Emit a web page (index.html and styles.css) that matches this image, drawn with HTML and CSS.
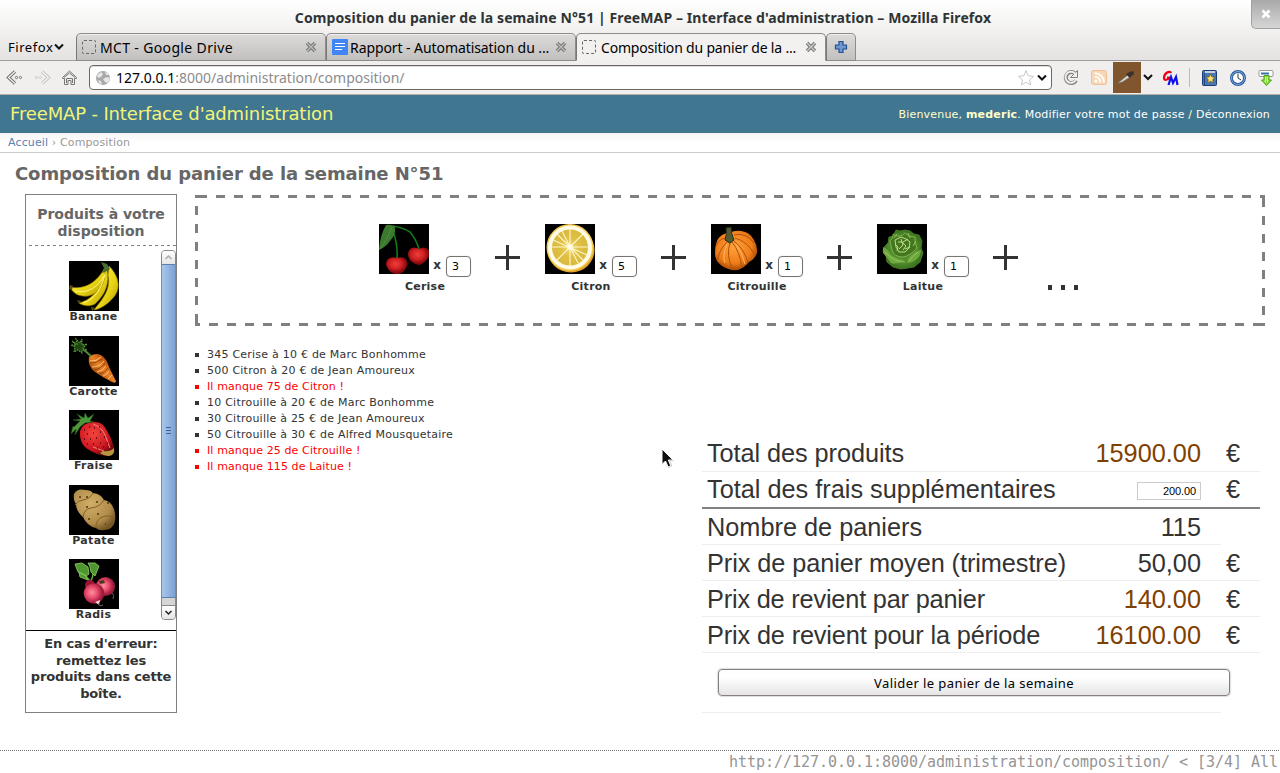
FILE: index.html
```html
<!DOCTYPE html>
<html lang="fr">
<head>
<meta charset="utf-8">
<title>Composition du panier de la semaine N°51</title>
<link rel="stylesheet" href="styles.css">
</head>
<body>
<div class="chrome">
  <div class="titlebar"><span class="t-title">Composition du panier de la semaine N°51 | FreeMAP – Interface d'administration – Mozilla Firefox</span>
    <div class="winclose"><svg width="10" height="10" viewBox="0 0 10 10"><path d="M1.5 1.5l7 7M8.5 1.5l-7 7" stroke="#fff" stroke-width="2.6"/></svg></div>
  </div>
  <div class="tabs">
    <div class="ffmenu"><span class="t-ff">Firefox</span><svg width="12" height="8" viewBox="0 0 12 8"><path d="M2 1.5l4 4 4-4" fill="none" stroke="#111" stroke-width="2"/></svg></div>
    <div class="tab"><i class="blank"></i><span class="t-tab1">MCT - Google Drive</span><svg class="x" width="12" height="12" viewBox="0 0 12 12"><path d="M2 2l8 8M10 2l-8 8" stroke="#777a75" stroke-width="3.6"/><path d="M2 2l8 8M10 2l-8 8" stroke="#b9bbb7" stroke-width="1.4"/></svg></div>
    <div class="tab"><svg width="16" height="16" viewBox="0 0 16 16"><rect width="16" height="16" rx="1" fill="#4285f4"/><path d="M3 4.5h10M3 7.5h10M3 10.5h7" stroke="#fff" stroke-width="1"/></svg><span class="t-tab2">Rapport - Automatisation du ...</span><svg class="x" width="12" height="12" viewBox="0 0 12 12"><path d="M2 2l8 8M10 2l-8 8" stroke="#777a75" stroke-width="3.6"/><path d="M2 2l8 8M10 2l-8 8" stroke="#b9bbb7" stroke-width="1.4"/></svg></div>
    <div class="tab on"><i class="blank"></i><span class="t-tab3">Composition du panier de la ...</span><svg class="x" width="12" height="12" viewBox="0 0 12 12"><path d="M2 2l8 8M10 2l-8 8" stroke="#777a75" stroke-width="3.6"/><path d="M2 2l8 8M10 2l-8 8" stroke="#c9cbc7" stroke-width="1.4"/></svg></div>
    <div class="tab plus"><svg width="14" height="14" viewBox="0 0 14 14"><path d="M5 1.5h4V5h3.500v4H9v3.500H5V9H1.500V5H5z" fill="#6c98cf" stroke="#24508c" stroke-width="1.200"/></svg></div>
  </div>
  <div class="toolbar">
    <svg class="nav" width="84" height="33" viewBox="0 0 84 33" fill="none">
      <path d="M15 10.500L8.500 16.500 15 22.500" stroke="#6e6e6e" stroke-width="3.200"/><path d="M15 10.500L8.500 16.500 15 22.500" stroke="#f4f4f4" stroke-width="1.200"/>
      <circle cx="16.500" cy="16.500" r="1.200" stroke="#777"/><circle cx="20.500" cy="16.500" r="1.100" stroke="#777"/>
      <path d="M42 10.500l6.500 6-6.500 6" stroke="#c4c4c4" stroke-width="3.200"/><path d="M42 10.500l6.500 6-6.500 6" stroke="#f6f6f6" stroke-width="1.200"/>
      <circle cx="36.500" cy="16.500" r="1.200" stroke="#ccc"/><circle cx="40.500" cy="16.500" r="1.100" stroke="#ccc"/>
      <path d="M62.500 16.500L69.500 10l7 6.500v1h-2v6h-3.500v-4h-3v4H64.500v-6h-2z" stroke="#777"/><path d="M64 16.500l5.500-4.500 5.500 4.500" stroke="#777"/>
      <path d="M66.500 22v-4.500h6V22" stroke="#777"/>
    </svg>
    <div class="url">
      <svg width="16" height="16" viewBox="0 0 16 16"><circle cx="8" cy="8" r="7" fill="#a8a8a8"/><path d="M2 5l4-3 2 2-2 3-3 1zM8 9l4-2 3 1-2 5-3-1zM10 2l3 1 1 2-3 0zM3 10l3 1 1 4-3-2z" fill="#e6e6e6"/></svg>
      <span class="t-url"><b>127.0.0.1</b>:8000/administration/composition/</span>
      <svg class="star" width="34" height="18" viewBox="0 0 34 18" fill="none"><path d="M9 1.500l2.200 5.300 5.300.6-4 3.500 1.200 5.100L9 13.300 4.300 16l1.200-5.100-4-3.500 5.300-.6z" stroke="#c8c8c8"/><path d="M21 6.500l4 4 4-4" stroke="#111" stroke-width="2"/></svg>
    </div>
    <svg class="tools" width="228" height="33" viewBox="0 0 228 33" fill="none">
      <path d="M23 12.500a5.500 5.500 0 1 0 1 7" stroke="#808080" stroke-width="4"/><path d="M25.500 9.500v7h-7z" fill="#eee" stroke="#808080"/><path d="M23 12.500a5.500 5.500 0 1 0 .600 6.700" stroke="#eee" stroke-width="2"/>
      <rect x="39.500" y="9.500" width="15" height="14" rx="2" fill="#f8d7b6" stroke="#efbf98"/><circle cx="44" cy="20" r="1.600" fill="#fff"/><path d="M42.500 15.500a6 6 0 0 1 6 6M42.500 12a9.500 9.500 0 0 1 9.500 9.500" stroke="#fff" stroke-width="1.700"/>
      <rect x="61" y="1" width="28" height="31" fill="#80562f"/><path d="M66 22l10-8 2 2-8 5z" fill="#ddd" stroke="#777" stroke-width=".5"/><path d="M74 13l3.500-2 2-1 2.500 1-.5 2.500-4 3.500z" fill="#39332e"/>
      <path d="M92 14l4 4 4-4" stroke="#111" stroke-width="2"/>
      <path d="M119 12c-1-3-7 0-7 5 0 3 4 2 6-1M115 16.500h4" stroke="#f00015" stroke-width="2.200"/><path d="M116.500 24l2.500-8 2 6 3-6 1.500 8" stroke="#1010ee" stroke-width="2.200"/>
      <path d="M137.500 7v19" stroke="#bbb"/>
      <rect x="150.500" y="9.500" width="14" height="15" rx="1" fill="#4b77b2" stroke="#173d78"/><path d="M153 11h10" stroke="#eee" stroke-width="1.500"/><path d="M152.500 12v12" stroke="#24497e"/><path d="M158.500 13l1.400 2.900 3.100.4-2.300 2.200.6 3.200-2.800-1.500-2.800 1.500.6-3.200-2.300-2.200 3.100-.4z" fill="#ffe36a" stroke="#604f13" stroke-width=".6"/>
      <circle cx="186" cy="17" r="6.500" fill="#fff" stroke="#2a5da0" stroke-width="3"/><circle cx="186" cy="17" r="6.500" stroke="#82a9da"/><path d="M186 12.500V17l3 2" stroke="#333"/>
      <rect x="207" y="9.500" width="14" height="6" rx="1" fill="#fff" stroke="#999"/><path d="M209 12.500h8" stroke="#3b6fae" stroke-width="2"/><path d="M212 14.500h5V19h2.500L214.500 24.500 209.500 19h2.500z" fill="#8ee04a" stroke="#4a9f12"/><path d="M213.500 16v5M215.500 16v5" stroke="#e5ffd2" stroke-width=".7"/>
    </svg>
  </div>
</div>
<header class="header"><span class="t-brand">FreeMAP - Interface d'administration</span><span class="t-user">Bienvenue, <b>mederic</b>. <em>Modifier votre mot de passe</em> / <em>Déconnexion</em></span></header>
<nav class="crumbs"><a>Accueil</a> › Composition</nav>
<main class="content">
  <h1>Composition du panier de la semaine N°51</h1>
  <div class="cols">
    <aside class="side">
      <h2>Produits à votre<br>disposition</h2>
      <div class="list">
        <div class="prods">
          <div class="prod"><svg width="50" height="50" viewBox="0 0 50 50"><defs><linearGradient id="ban" x2="1" y2="1"><stop stop-color="#fff34a"/><stop offset=".6" stop-color="#e8d312"/><stop offset="1" stop-color="#a98e08"/></linearGradient></defs><rect width="50" height="50"/><path d="M40 5c11 11 12 24 4 32-6 7-13 11-19 12 9-12 17-20 14-35z" fill="url(#ban)" stroke="#8b7900" stroke-width=".6"/><path d="M38 8c3 15-2 26-12 35-5 3-12 2-16-1 14-4 21-13 25-33z" fill="url(#ban)" stroke="#8b7900" stroke-width=".6"/><path d="M36 9c1 13-6 24-17 26-8 1-15-2-18-9 15 3 27-5 34-18z" fill="url(#ban)" stroke="#8b7900" stroke-width=".6"/><path d="M32 1l6 2 3 5-5 3-3 1 2-5z" fill="#4a6d31"/><path d="M1 24l3 1-1 4-3-1zM8 39l4 1-2 3zM22 46l4 1-3 3z" fill="#5b4b17"/><path d="M6 30c12 3 23-4 29-15M14 42c12-4 19-15 22-29" fill="none" stroke="#fff884" stroke-width="1"/></svg><span>Banane</span></div>
          <div class="prod"><svg width="50" height="50" viewBox="0 0 50 50"><defs><linearGradient id="car" x1=".2" y1=".8" x2=".8" y2=".2"><stop stop-color="#8f3806"/><stop offset=".5" stop-color="#ea8527"/><stop offset="1" stop-color="#a63d08"/></linearGradient></defs><rect width="50" height="50"/><path d="M20 21q5-5 12-2 6 4 8 12l7 14q0 3-4 1-10-5-17-10-8-6-6-15z" fill="url(#car)"/><path d="M21 25q6 1 11-4M23 31q8 0 12-6M28 36q6-1 9-6M34 40q4-1 6-5M39 43l4-4" fill="none" stroke="#ffc07a" stroke-width="1"/><path d="M21 27q6 1 12-4M25 34q7-1 11-7M31 38q5-1 8-6" fill="none" stroke="#8f3608" stroke-width=".8"/><path d="M22 20Q17 16 9 8" stroke="#4e8738" stroke-width="2"/><path d="M3 5l5 3-1-5 4 4 2-4 0 6 5-1-4 4 4 2-5 0 0 3-4-3-4 2 1-5-4-2 5 0z" fill="#1d4512" stroke="#61a03c" stroke-width="1.100" stroke-dasharray="1.500 1"/></svg><span>Carotte</span></div>
          <div class="prod"><svg width="50" height="50" viewBox="0 0 50 50"><defs><radialGradient id="fra" cx=".4" cy=".35" r=".65"><stop stop-color="#f4463f"/><stop offset=".7" stop-color="#cc1620"/><stop offset="1" stop-color="#7a0811"/></radialGradient></defs><rect width="50" height="50"/><path d="M11 21q2-8 13-9 9-1 13 7 5 8 8 18 2 8-6 9-13-1-22-8-7-6-6-17z" fill="url(#fra)"/><path d="M34 41q7 1 11-3 1 8-6 8-4 0-8-3z" fill="#b3983e"/><path d="M24 14q9 3 12 11l5 13M24 37l11 4" fill="none" stroke="#ff9c91" stroke-width=".8"/><path d="M15 20h1M20 17h1M25 18h1M30 17h1M18 24h1M24 23h1M31 22h1M15 29h1M21 29h1M27 28h1M35 27h1M18 34h1M24 34h1M31 33h1M28 38h1M34 37h1M38 33h1" stroke="#4f0710" stroke-width="1.500"/><path d="M5 17l6-6-7-1 8-1-4-5 7 4 1-5 3 5 6-4-4 7 4 1-9 1-5 4-5 8 1-6-5 5 2-8z" fill="#4f963a" stroke="#1d4f19" stroke-width=".6"/></svg><span>Fraise</span></div>
          <div class="prod"><svg width="50" height="50" viewBox="0 0 50 50"><defs><radialGradient id="pat" cx=".4" cy=".35" r=".7"><stop stop-color="#d0af67"/><stop offset=".7" stop-color="#b08b4a"/><stop offset="1" stop-color="#755725"/></radialGradient></defs><rect width="50" height="50"/><path d="M5 9q3-6 11-4 6 0 8 3 8 1 11 7 7 1 10 9 2 6 1 12-2 9-11 9-5 1-8-2-9-2-13-11-7-6-7-13-3-4-2-10z" fill="url(#pat)"/><path d="M6 20q3-5 8-5 7-1 10-7M14 32q1-8 8-9 9-1 13-8M27 43q-1-9 9-12 7-1 10 4" fill="none" stroke="#836126" stroke-width="1"/><path d="M10 12h2M17 12h2M17 22h2M27 17h2M28 29h2M19 34h2M38 18h2M36 39h1" stroke="#4e3512" stroke-width="1.600"/></svg><span>Patate</span></div>
          <div class="prod"><svg width="50" height="50" viewBox="0 0 50 50"><defs><radialGradient id="rad" cx=".4" cy=".45"><stop stop-color="#ff8fa2"/><stop offset=".55" stop-color="#e84c6b"/><stop offset="1" stop-color="#a01c3e"/></radialGradient></defs><rect width="50" height="50"/><path d="M22 23Q17 18 12 10M22 22Q26 14 22 6" fill="none" stroke="#65a43e" stroke-width="1.600"/><path d="M6 5l7-1 6 4 1 7-3 2-8-4zM10 13l6 3 3 5-8-3zM19 4l7 0 4 3-2 5-2 5-4-4-1-5z" fill="#4d9630" stroke="#8ac35e" stroke-width=".9"/><circle cx="36.500" cy="27.500" r="9.500" fill="url(#rad)"/><circle cx="21" cy="26" r="5" fill="#9b1435"/><path d="M30 22l5-1 1 3-5 1z" fill="#4c3a20"/><circle cx="25" cy="34.500" r="10.300" fill="url(#rad)"/><path d="M26 43l5-2-1 5z" fill="#ffd3da"/><path d="M29 44q1 4 5 2M43 34q3 2 1 6" fill="none" stroke="#99737c" stroke-width=".8"/></svg><span>Radis</span></div>
        </div>
        <div class="scroll"><div class="up"><svg width="13" height="13" viewBox="0 0 13 13"><path d="M3.500 8l3-3 3 3" fill="none" stroke="#aaa" stroke-width="1.500"/></svg></div><div class="thumb"><i></i><i></i><i></i></div><div class="track"></div><div class="down"><svg width="13" height="13" viewBox="0 0 13 13"><path d="M3.500 5l3 3 3-3" fill="none" stroke="#222" stroke-width="1.500"/></svg></div></div>
      </div>
      <p class="err">En cas d'erreur:<br>remettez les<br>produits dans cette<br>boîte.</p>
    </aside>
    <section class="mainc">
      <div class="basket">
        <div class="item"><div class="row"><svg width="50" height="50" viewBox="0 0 50 50"><defs><radialGradient id="cer" cx=".45" cy=".4"><stop stop-color="#ee3f3c"/><stop offset=".6" stop-color="#cf2022"/><stop offset="1" stop-color="#85090d"/></radialGradient></defs><rect width="50" height="50"/><path d="M14 2Q25 4 31 8q6 7 9 17M14 7q5 14 4 28" fill="none" stroke="#14791c" stroke-width="1.600"/><path d="M7 1q6-1 9 2 1 8-5 14-4 6-11 9Q1 11 7 1z" fill="#3b7a2e"/><path d="M13 3Q8 17 1 25" stroke="#63994f" fill="none" stroke-width=".6"/><path d="M18 34q5-2 9 1 3 5 0 9-3 6-9 6-6 0-9-5-4-6 0-10 4-3 9-1z" fill="url(#cer)"/><path d="M40 25q5-3 9 0 3 5 0 9-4 6-9 7-6-1-9-5-4-6 0-11 4-3 9 0z" fill="url(#cer)"/></svg><b>x</b><span class="qty">3</span></div><strong>Cerise</strong></div><i class="cross"></i>
        <div class="item"><div class="row"><svg width="50" height="50" viewBox="0 0 50 50"><defs><radialGradient id="cit"><stop stop-color="#f3dc7c"/><stop offset=".5" stop-color="#dfc144"/><stop offset="1" stop-color="#d9b93e"/></radialGradient></defs><rect width="50" height="50"/><ellipse cx="26" cy="26" rx="23.500" ry="22.500" fill="#dfa128"/><circle cx="25" cy="23.500" r="23.500" fill="#f3cb51"/><circle cx="25" cy="23.500" r="22" fill="#fffbe6"/><circle cx="25" cy="23.500" r="18" fill="url(#cit)"/><path d="M25 5v37M6.500 23h37M12 10l26 26M38 10L12 36M17 7l16 32M8 16l34 15" stroke="#fff6cc" stroke-width="1.100"/><circle cx="25" cy="23" r="2.800" fill="#fffbe4"/></svg><b>x</b><span class="qty">5</span></div><strong>Citron</strong></div><i class="cross"></i>
        <div class="item"><div class="row"><svg width="50" height="50" viewBox="0 0 50 50"><defs><radialGradient id="pum" cx=".45" cy=".4" r=".6"><stop stop-color="#ffa23c"/><stop offset=".7" stop-color="#ef7d18"/><stop offset="1" stop-color="#a84b05"/></radialGradient></defs><rect width="50" height="50"/><path d="M6 17q4-8 12-8 6-3 12-2 9 1 13 9 4 7 3 13-2 6-8 9-5 6-11 8-9 1-16-4-7-5-7-12 0-8 2-13z" fill="url(#pum)"/><path d="M16 18q-8 8-9 17M19 19q-4 12 2 25M21 18q8 10 10 26M23 17q11 9 14 22M24 14q12 3 20 17M23 11q12-3 20 8M15 14q-6 0-10 8" fill="none" stroke="#b35009" stroke-width="1"/><path d="M16 20q-5 12-2 19M25 20q7 10 9 20" fill="none" stroke="#ffb863" stroke-width="1"/><path d="M15 4l5-1q0 7 3 13l-4 3-5-3q2-5 1-12z" fill="#525a30" stroke="#252d1b"/></svg><b>x</b><span class="qty">1</span></div><strong>Citrouille</strong></div><i class="cross"></i>
        <div class="item"><div class="row"><svg width="50" height="50" viewBox="0 0 50 50"><defs><radialGradient id="lai" r=".6"><stop stop-color="#5f9835"/><stop offset=".6" stop-color="#4f8a2b"/><stop offset="1" stop-color="#2b6116"/></radialGradient></defs><rect width="50" height="50"/><path d="M19 6l4 1 5-1 5 1 4 3 5 1 3 6-1 7 2 5-3 9-6 5-6 1-7 1-8-2-6-5-1-6-3-5 2-5 3-3 1-6 4-1z" fill="url(#lai)" stroke="#4d8728" stroke-width=".8"/><path d="M6 23q5 2 8 8 7 5 14 5-8 5-14 3-4-6-8-10zM44 26q-6 1-9 5-4 2-5 8 9-1 13-8z" fill="#6fa93e"/><path d="M13 17q4-3 3-7 7 5 12-1 4 5 10 4-1 6 2 11-7 8-14 9-9 0-11-7z" fill="#42761f" stroke="#8fbb57" stroke-width=".8"/><path d="M18 16l6-3 5 2 4 3-1 6-4 4-6 0-3-5zM21 18l4 0 4 4-3 4M18 20l3 3-1 4M24 15l2 6-4 4M31 15l-5 3M33 23l-5 2" fill="none" stroke="#c4db84" stroke-width="1"/><path d="M8 28q9 10 20 10M41 28q-5 3-9 9M20 10l-3 4M31 9l2 5M39 17l-3 5" fill="none" stroke="#9bc662" stroke-width=".9"/></svg><b>x</b><span class="qty">1</span></div><strong>Laitue</strong></div><i class="cross"></i>
        <div class="dots"><i></i><i></i><i></i></div>
      </div>
      <ul class="log">
        <li>345 Cerise à 10 € de Marc Bonhomme</li><li>500 Citron à 20 € de Jean Amoureux</li><li class="red">Il manque 75 de Citron !</li><li>10 Citrouille à 20 € de Marc Bonhomme</li><li>30 Citrouille à 25 € de Jean Amoureux</li><li>50 Citrouille à 30 € de Alfred Mousquetaire</li><li class="red">Il manque 25 de Citrouille !</li><li class="red">Il manque 115 de Laitue !</li>
      </ul>
      <div class="totals">
        <div class="tr"><span class="l1">Total des produits</span><span class="n br">15900.00</span><span class="e">€</span></div>
        <div class="tr thick"><span>Total des frais supplémentaires</span><span class="fee">200.00</span><span class="e">€</span></div>
        <div class="tr low short"><span>Nombre de paniers</span><span class="n">115</span></div>
        <div class="tr low"><span class="l4">Prix de panier moyen (trimestre)</span><span class="n">50,00</span><span class="e">€</span></div>
        <div class="tr low"><span class="l5">Prix de revient par panier</span><span class="n br">140.00</span><span class="e">€</span></div>
        <div class="tr low"><span class="l6">Prix de revient pour la période</span><span class="n br">16100.00</span><span class="e">€</span></div>
        <div class="submit"><div class="btn"><span class="t-btn">Valider le panier de la semaine</span></div></div>
      </div>
    </section>
  </div>
</main>
<footer class="status"><span>http://127.0.0.1:8000/administration/composition/ &lt; [3/4] All</span></footer>
<svg class="cursor" width="14" height="21" viewBox="0 0 14 21"><path d="M1 1v15.500l3.500-3.500 2.600 6 2.700-1.200L7.300 12H12z" fill="#111" stroke="#fff"/><path d="M12.500 12.500H8.500l2.400 5.400-3.600 1.800" fill="none" stroke="#bbb" stroke-width=".7"/></svg>
</body>
</html>
```
FILE: styles.css
```css
* { box-sizing: border-box; }
body { margin: 0; width: 1280px; height: 773px; overflow: hidden; background: #fff; font: 11px "DejaVu Sans", sans-serif; color: #333; display: flex; flex-direction: column; }
svg { display: block; flex: none; }
span { white-space: nowrap; }
.chrome { height: 95px; flex: none; font-family: "Noto Sans", "Open Sans", sans-serif; color: #000; background: linear-gradient(#fff, #e4e2e0 61px); }
.titlebar { height: 33px; display: flex; justify-content: center; align-items: center; padding: 1px 0 0 6px; position: relative; }
.t-title { font-size: 14px; font-weight: bold; color: #2e3436; letter-spacing: .1px; }
.winclose { position: absolute; right: 0; top: 0; width: 29px; height: 29px; border: 1px solid #a2a2a2; border-width: 0 0 1px 1px; border-radius: 0 0 0 5px; background: linear-gradient(#a9a9a9, #d6d6d6); display: flex; align-items: center; justify-content: center; }
.tabs { height: 28px; display: flex; border-bottom: 1px solid #a09e9c; }
.ffmenu { width: 76px; padding-left: 8px; display: flex; align-items: center; font-size: 13px; }
.t-ff { letter-spacing: .55px; }
.tab { width: 250px; height: 28px; border: 1px solid #8e8d8b; border-left-color: #777; border-radius: 5px 5px 0 0; background: linear-gradient(#dcdbda, #c1c0bf); box-shadow: inset 0 1px #eee; display: flex; align-items: center; padding: 0 8px 0 5px; font-size: 14px; gap: 3px; }
.tab span { padding-top: 1px; }
.t-tab1 { letter-spacing: .35px; }
.t-tab2 { letter-spacing: -.08px; margin-left: -1px; }
.t-tab3 { letter-spacing: -.18px; margin-left: 1px; }
.tab .x { margin-left: auto; }
.tab.on { background: #f2f1f0; border-bottom-color: #f2f1f0; }
.tab.plus { width: 30px; padding: 0 7px; }
.blank { width: 14px; height: 14px; border: 1px dashed #666; border-radius: 2px; margin-right: 1px; flex: none; }
.toolbar { height: 34px; background: #f0efee; border-bottom: 1px solid #b5afa9; display: flex; }
.nav { margin-right: 5px; }
.url { width: 963px; height: 25px; margin-top: 4px; border: 1px solid #6d6865; border-radius: 4px; background: #fff; box-shadow: inset 0 1px #ddd; display: flex; align-items: center; padding: 0 0 0 5px; }
.t-url { margin-left: 5px; font-size: 14px; color: #8c8c8c; }
.t-url b { font-weight: normal; color: #000; }
.star { margin-left: auto; }
.header { height: 38px; flex: none; background: #417690; display: flex; justify-content: space-between; align-items: center; padding: 0 10px; color: #ffc; }
.t-brand { font-size: 18px; color: #f4f379; letter-spacing: -.14px; padding-bottom: 2px; }
.t-user { font-size: 11px; letter-spacing: .2px; }
.t-user em { color: #fff; font-style: normal; }
.crumbs { height: 20px; flex: none; border-bottom: 1px solid #ccc; background: linear-gradient(#f4f4f4, #fff 50%); padding: 3px 8px; line-height: 14px; color: #999; letter-spacing: .13px; }
.crumbs a { color: #5b80b2; }
.content { height: 597px; flex: none; padding: 10px 15px 0; }
h1 { margin: 0; font-size: 18px; line-height: 21px; color: #666; height: 31px; letter-spacing: -.1px; }
.cols { display: flex; gap: 18px; padding-left: 10px; }
.side { width: 152px; height: 519px; border: 1px solid #808080; flex: none; }
.side h2 { margin: 0 0 0 3px; padding: 11px 3px 0 0; height: 51px; font-size: 14px; line-height: 17px; text-align: center; color: #666; background: repeating-linear-gradient(90deg, #808080 0 3px, transparent 3px 6px) bottom / 100% 1px no-repeat; }
.list { height: 385px; display: flex; justify-content: space-between; border-bottom: 1px solid #000; padding-top: 4px; }
.prods { width: 135px; padding-top: 11px; display: flex; flex-direction: column; align-items: center; }
.prod { height: 74.5px; width: 80px; flex: none; display: flex; flex-direction: column; align-items: center; font-weight: bold; line-height: 11px; letter-spacing: .3px; }
.scroll { width: 15px; height: 370px; border: 1px solid #888; border-radius: 4px; background: #d6d5d3; overflow: hidden; flex: none; display: flex; flex-direction: column; }
.up, .down { height: 13px; background: linear-gradient(#fff, #e5e5e5); }
.down { height: 14px; border-top: 1px solid #888; }
.thumb { height: 334px; border: 1px solid #5c81b0; border-width: 1px 0; background: linear-gradient(90deg, #a9c6eb, #7da2d5); display: flex; flex-direction: column; justify-content: center; align-items: center; gap: 2px; padding-bottom: 2px; }
.thumb i { width: 5px; height: 1px; background: #3c639a; }
.track { flex: 1; }
.err { margin: 5px 0 0; font-size: 13px; line-height: 16.7px; font-weight: bold; text-align: center; letter-spacing: -.17px; }
.mainc { width: 1070px; padding-top: 1px; flex: none; }
.basket { height: 131px; padding: 29px 0 0 184px; display: flex; background:
  linear-gradient(#808080, #808080) 0 0 / 3px 3px no-repeat,
  linear-gradient(#808080, #808080) 100% 100% / 3px 3px no-repeat,
  linear-gradient(#808080, #808080) 0 100% / 5px 3px no-repeat,
  repeating-linear-gradient(90deg, #808080 0 9px, transparent 9px 18px) 3px 0 / 1067px 3px no-repeat,
  repeating-linear-gradient(90deg, #808080 0 9px, transparent 9px 18px) 14px 128px / 1056px 3px no-repeat,
  repeating-linear-gradient(#808080 0 9px, transparent 9px 18px) 0 11px / 3px 120px no-repeat,
  repeating-linear-gradient(#808080 0 9px, transparent 9px 18px) 1067px 3px / 3px 125px no-repeat; }
.item { width: 92px; height: 72px; text-align: center; flex: none; }
.item .row { display: flex; height: 52px; align-items: flex-end; }
.item .row svg { align-self: flex-start; }
.item b { width: 8px; margin: 0 5px 0 4px; font-size: 12px; line-height: 14px; padding-bottom: 4px; }
.item strong { display: block; margin-top: 4px; line-height: 13px; letter-spacing: .25px; }
.qty { width: 25px; height: 21px; border: 1px solid #777370; border-radius: 4px; line-height: 20px; text-align: left; padding-left: 5px; box-shadow: 0 0 1px #bbb; color: #000; margin-bottom: -1px; }
.cross { width: 25px; height: 25px; margin: 21px 25px 0 24px; flex: none; background: linear-gradient(#333, #333) center / 3px 25px no-repeat, linear-gradient(#333, #333) center / 25px 3px no-repeat; }
.dots { display: flex; gap: 9px; margin: 61px 0 0 5px; }
.dots i { width: 4px; height: 5px; background: #333; }
.log { margin: 21px 0 0; padding: 0; list-style: none; height: 128px; width: 400px; font-size: 11px; letter-spacing: .23px; }
.log li { height: 16px; line-height: 16px; display: flex; align-items: center; gap: 8px; white-space: nowrap; }
.log li::before { content: ""; width: 4px; height: 4px; background: currentColor; }
.log .red { color: #f00; letter-spacing: .12px; }
.totals { width: 558px; margin: -39px 0 0 507px; font: 25.3px "Liberation Sans", Arial, sans-serif; }
.tr { display: flex; height: 36px; border-bottom: 1px solid #eee; padding: 0 20px 0 5px; line-height: 35px; }
.tr.thick { border-bottom: 2px solid #808080; height: 37px; }
.tr.low { line-height: 37px; }
.tr.short { width: 519px; padding-right: 20px; }
.l1, .l4 { letter-spacing: -.07px; }
.l5 { letter-spacing: -.18px; }
.l6 { letter-spacing: -.14px; }
.n, .fee { margin-left: auto; }
.br { color: #804000; }
.e { width: 14px; margin-left: 25px; }
.fee { width: 64px; height: 18px; margin-top: 10px; border: 1px solid #ccc; font-size: 11px; line-height: 17px; text-align: right; padding-right: 4px; color: #000; letter-spacing: -.1px; }
.submit { width: 519px; height: 60px; border-bottom: 1px solid #eee; padding: 16px 0 0 16px; }
.btn { width: 512px; height: 27px; border: 1px solid #85807d; border-radius: 4px; background: linear-gradient(#fff 30%, #e6e5e4); box-shadow: 0 0 1px 1px #ddd; display: flex; align-items: center; justify-content: center; font: 13px "Noto Sans", sans-serif; color: #000; }
.t-btn { letter-spacing: .42px; padding-top: 1px; }
.status { height: 23px; margin-top: -1px; background: repeating-linear-gradient(90deg, #777 0 1px, transparent 1px 2px) 0 1px / 100% 1px no-repeat; text-align: right; padding: 4px 2px 0 0; font: 15px/18px "DejaVu Sans Mono", monospace; color: #959595; letter-spacing: -.03px; }
.cursor { position: absolute; left: 661px; top: 448px; }
```
